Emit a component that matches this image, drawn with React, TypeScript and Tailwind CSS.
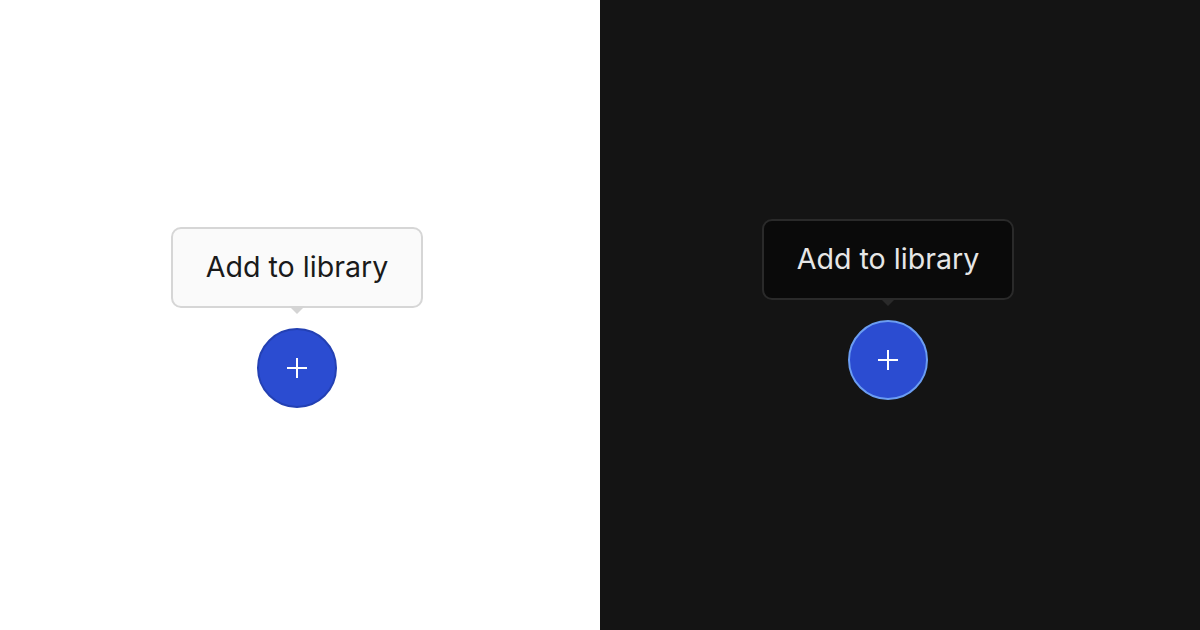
import React from "react";

function Group({ dark }: { dark: boolean }) {
  return (
    <div className="flex flex-col items-center">
      <div
        className={
          "relative flex h-[81px] w-[252px] items-center justify-center rounded-[10px] border-2 text-[28.6px] " +
          (dark
            ? "border-[#2a2a2a] bg-[#0a0a0a] text-[#e6e6e6]"
            : "border-[#d6d6d6] bg-[#fafafa] text-[#1a1a1a]")
        }
        style={{ fontFamily: "Inter, 'Noto Sans', sans-serif" }}
      >
        Add to library
        <div
          className={
            "absolute left-1/2 top-full h-0 w-0 -translate-x-1/2 border-x-[8px] border-t-[8px] border-x-transparent " +
            (dark ? "border-t-[#2a2a2a]" : "border-t-[#d4d4d4]")
          }
        />
      </div>
      <div
        className={
          "mt-[20px] flex h-[80px] w-[80px] items-center justify-center rounded-full border-2 bg-[#2b4cd1] " +
          (dark ? "border-[#6b9df2]" : "border-[#2340b3]")
        }
      >
        <svg width="22" height="22" viewBox="0 0 22 22">
          <path d="M11 1v20M1 11h20" stroke="#ffffff" strokeWidth="2" />
        </svg>
      </div>
    </div>
  );
}

export default function App() {
  return (
    <div className="grid h-[630px] w-[1200px] grid-cols-2">
      <div className="flex items-center justify-center bg-white pr-[6px] pt-[5px]">
        <Group dark={false} />
      </div>
      <div className="flex items-center justify-center bg-[#141414] pb-[11px] pr-[24px]">
        <Group dark={true} />
      </div>
    </div>
  );
}
